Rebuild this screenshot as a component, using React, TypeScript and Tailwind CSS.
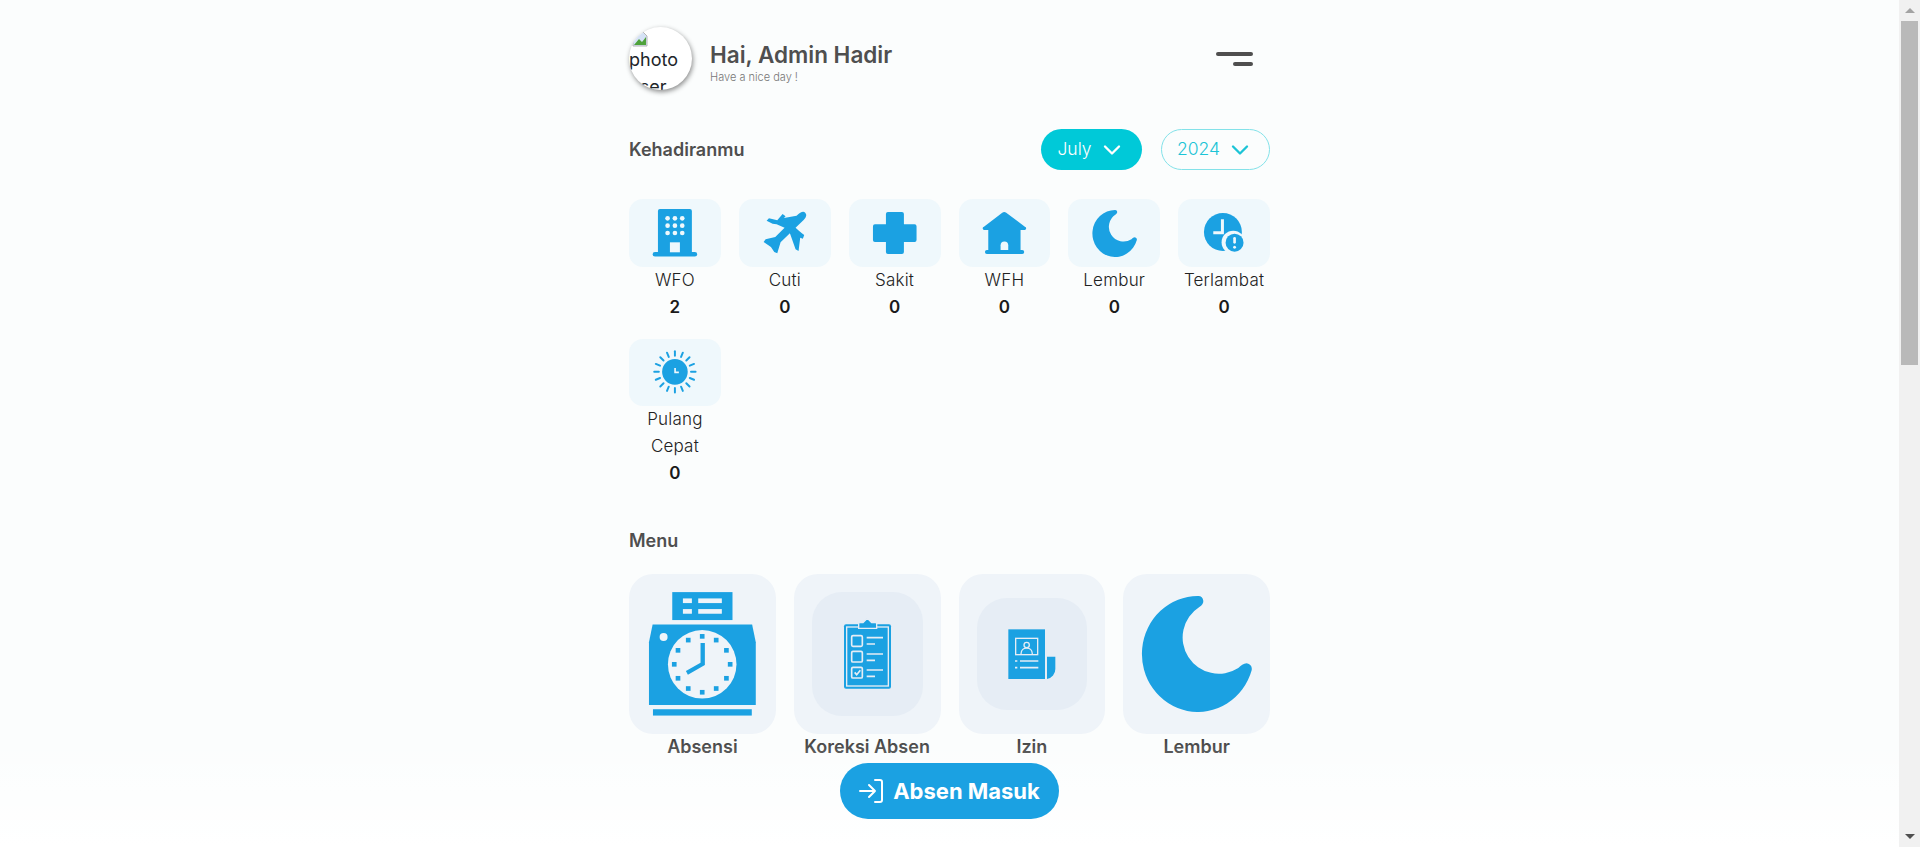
import { ChevronDown } from 'lucide-react';

const blue = '#1ba1e2';
const tileBg = '#eff8fc';
const font = { fontFamily: 'Inter, "Noto Sans", sans-serif' };

function Moon({ className }: { className: string }) {
  return (
    <svg viewBox="573 92 333 348" className={className}>
      <path
        fill={blue}
        d="M745 92A168 174 0 1 0 905 315Q908 298 890 294Q876 296 865 308A108 108 0 0 1 748 125Q760 118 760 107Q758 92 745 92Z"
      />
    </svg>
  );
}

function Building() {
  return (
    <svg viewBox="27 27 276 204" className="h-full w-full">
      <path fill={blue} d="M120 57h90a6 6 0 0 1 6 6v123h9a6 6 0 0 1 0 14H105a6 6 0 0 1 0-14h9V63a6 6 0 0 1 6-6Z" />
      {[85, 107, 129].map((y) =>
        [143, 165, 187].map((x) => <circle key={`${x}-${y}`} cx={x} cy={y} r="7" fill={tileBg} />),
      )}
      <rect x="150" y="157" width="30" height="30" fill={tileBg} />
    </svg>
  );
}

function Plane() {
  return (
    <svg viewBox="357 27 276 204" className="h-full w-full">
      <path
        fill={blue}
        d="M556 68Q564 76 552 89L527 113L537 122L546 130L553 135L549 146L541 143L536 183L527 178L510 130L482 157L472 190L463 186L453 171L431 156L437 148L466 141L494 113L470 103L458 101L440 92L447 85L472 91L488 72L497 79L492 84L530 77Q548 60 556 68Z"
      />
    </svg>
  );
}

function Plus() {
  return (
    <svg viewBox="687 27 276 204" className="h-full w-full">
      <path
        fill={blue}
        d="M804 66h42a6 6 0 0 1 6 6v31h32a6 6 0 0 1 6 6v41a6 6 0 0 1-6 6h-32v30a6 6 0 0 1-6 6h-42a6 6 0 0 1-6-6v-30h-33a6 6 0 0 1-6-6v-41a6 6 0 0 1 6-6h33V72a6 6 0 0 1 6-6Z"
      />
    </svg>
  );
}

function House() {
  return (
    <svg viewBox="27 27 276 204" className="h-full w-full">
      <path
        fill={blue}
        d="M157 68a10 10 0 0 1 12 0l56 42a5 5 0 0 1-3 10h-10v60h5a6 6 0 0 1 0 12H111a6 6 0 0 1 0-12h4v-60h-10a5 5 0 0 1-3-10Z"
      />
      <path fill={tileBg} d="M152 180v-14a11.500 11.500 0 0 1 23 0v14Z" />
    </svg>
  );
}

function ClockAlert() {
  return (
    <svg viewBox="684 27 276 204" className="h-full w-full">
      <circle cx="819" cy="126" r="57" fill={blue} />
      <path fill={tileBg} d="M813 88h9v45h-32v-9h23Z" />
      <circle cx="850" cy="157" r="35" fill={tileBg} />
      <circle cx="854" cy="158" r="27" fill={blue} />
      <rect x="850" y="141" width="8" height="20" rx="4" fill={tileBg} />
      <circle cx="854" cy="172" r="4.500" fill={tileBg} />
    </svg>
  );
}

function SunClock() {
  const rays = Array.from({ length: 16 }, (_, i) => (i * Math.PI) / 8);
  return (
    <svg viewBox="27 27 276 204" className="h-full w-full">
      {rays.map((a) => (
        <line
          key={a}
          x1={165 + 49 * Math.cos(a)}
          y1={127 + 49 * Math.sin(a)}
          x2={165 + 63 * Math.cos(a)}
          y2={127 + 63 * Math.sin(a)}
          stroke={blue}
          strokeWidth="6"
          strokeLinecap="round"
        />
      ))}
      <circle cx="165" cy="127" r="39" fill={blue} />
      <path fill={tileBg} d="M163 115h5v11h9v5h-14Z" />
    </svg>
  );
}

function TimeClock() {
  const ticks = Array.from({ length: 12 }, (_, i) => (i * Math.PI) / 6);
  return (
    <svg viewBox="27 27 441 480" className="h-full w-full">
      <rect x="157" y="81" width="181" height="84" fill={blue} />
      <rect x="189" y="100" width="27" height="14" fill="#eff4f9" />
      <rect x="235" y="100" width="71" height="14" fill="#eff4f9" />
      <rect x="189" y="132" width="27" height="14" fill="#eff4f9" />
      <rect x="235" y="132" width="71" height="14" fill="#eff4f9" />
      <path fill={blue} d="M98 178H397L408 232V420H87V232Z" />
      <circle cx="131" cy="216" r="12" fill="#eff4f9" />
      <circle cx="247" cy="298" r="103" fill="#eff4f9" />
      {ticks.map((a) => (
        <rect
          key={a}
          x={240 + 84 * Math.cos(a)}
          y={291 + 84 * Math.sin(a)}
          width="14"
          height="14"
          fill={blue}
        />
      ))}
      <path fill={blue} d="M242 234h13v66l-51 29-6-11 44-25Z" />
      <rect x="99" y="433" width="297" height="19" fill={blue} />
    </svg>
  );
}

function Clipboard() {
  const light = '#e6edf5';
  return (
    <svg viewBox="522 27 441 480" className="h-full w-full">
      <rect x="672" y="178" width="141" height="193" rx="6" fill={blue} />
      <rect x="680" y="186" width="125" height="177" fill="none" stroke={light} strokeWidth="4" />
      <path
        fill={blue}
        stroke={light}
        strokeWidth="4"
        d="M716 190V176a3 3 0 0 1 3-3h10l13-13 13 13h12a3 3 0 0 1 3 3v14Z"
      />
      {[212, 259, 307].map((y) => (
        <rect key={y} x="695" y={y} width="32" height="32" rx="4" fill={blue} stroke={light} strokeWidth="5" />
      ))}
      <path d="M704 322l6 7 11-13" fill="none" stroke={light} strokeWidth="5" />
      {[218, 267, 315].map((y) => (
        <g key={y} stroke={light} strokeWidth="5">
          <line x1="740" y1={y} x2="789" y2={y} />
          <line x1="740" y1={y + 19} x2="765" y2={y + 19} />
        </g>
      ))}
    </svg>
  );
}

function Document() {
  const light = '#e6edf5';
  return (
    <svg viewBox="27 27 441 480" className="h-full w-full">
      <rect x="175" y="193" width="110" height="149" fill={blue} />
      <path fill={blue} d="M291 275h25v37a30 30 0 0 1-25 30Z" />
      <rect x="197" y="220" width="66" height="49" fill="none" stroke={light} strokeWidth="4" />
      <circle cx="230" cy="240" r="8" fill="none" stroke={light} strokeWidth="4" />
      <path d="M213 267c0-24 34-24 34 0" fill="none" stroke={light} strokeWidth="4" />
      <g stroke={light} strokeWidth="5">
        <line x1="210" y1="288" x2="265" y2="288" />
        <line x1="210" y1="308" x2="265" y2="308" />
        <line x1="195" y1="288" x2="202" y2="288" />
        <line x1="195" y1="308" x2="202" y2="308" />
      </g>
    </svg>
  );
}

const stats = [
  { label: 'WFO', value: 2, icon: <Building />, tile: 'h-[68px]' },
  { label: 'Cuti', value: 0, icon: <Plane />, tile: 'h-[68px]' },
  { label: 'Sakit', value: 0, icon: <Plus />, tile: 'h-[68px]' },
  { label: 'WFH', value: 0, icon: <House />, tile: 'h-[68px]' },
  { label: 'Lembur', value: 0, icon: <Moon className="h-[47px] w-[45px]" />, tile: 'h-[68px]' },
  { label: 'Terlambat', value: 0, icon: <ClockAlert />, tile: 'h-[68px]' },
  { label: 'Pulang Cepat', value: 0, icon: <SunClock />, tile: 'h-[67px]' },
];

const menus = [
  { label: 'Absensi', icon: <TimeClock /> },
  {
    label: 'Koreksi Absen',
    icon: (
      <div className="relative h-[124px] w-[111px] overflow-hidden rounded-[30px] bg-[#e6edf5]">
        <div className="absolute left-[-18px] top-[-18px] h-[160px] w-[147px]">
          <Clipboard />
        </div>
      </div>
    ),
  },
  {
    label: 'Izin',
    icon: (
      <div className="relative h-[112px] w-[110px] overflow-hidden rounded-[30px] bg-[#e6edf5]">
        <div className="absolute left-[-18px] top-[-24px] h-[160px] w-[147px]">
          <Document />
        </div>
      </div>
    ),
  },
  { label: 'Lembur', icon: <Moon className="h-[116px] w-[111px]" /> },
];

export default function App() {
  return (
    <div className="flex h-[847px] overflow-hidden bg-[#fbfdfd]" style={font}>
      <main className="relative flex-1 overflow-hidden">
        <div className="mx-auto w-[641px] pt-[27px]">
          {/* Header */}
          <header className="flex items-center justify-between">
            <div className="flex items-center gap-[18px]">
              <div className="h-[63px] w-[63px] overflow-hidden rounded-full bg-white text-[18px] leading-[27px] text-[#212529] shadow-[1px_2px_5px_rgba(0,0,0,0.45)]">
                <svg viewBox="0 0 16 16" className="ml-[3px] mt-[4px] h-4 w-4">
                  <path d="M1 1h10l4 4v10H1Z" fill="#d5e2f5" stroke="#b5b5b5" />
                  <path d="M2 14l5-6 3 3 4-5v8Z" fill="#4fa23b" />
                </svg>
                <div className="mt-[-1px]">photo</div>
                <div>user</div>
              </div>
              <div className="pt-[8px]">
                <h1 className="text-[22.500px] leading-[28px] font-semibold text-[#4f4f4f]">Hai, Admin Hadir</h1>
                <p className="text-[11px] leading-[16px] font-light text-[#777777]">Have a nice day !</p>
              </div>
            </div>
            <div className="mr-[17px] flex w-[37px] flex-col items-end gap-[6px]">
              <span className="h-1 w-full rounded-full bg-[#4f4f4f]" />
              <span className="h-1 w-5 rounded-full bg-[#4f4f4f]" />
            </div>
          </header>

          {/* Kehadiran */}
          <section className="mt-[39px] flex h-[41px] items-center justify-between">
            <h2 className="-mt-px text-[18px] font-semibold text-[#4f4f4f]">Kehadiranmu</h2>
            <div className="flex gap-[19px]">
              <button className="flex h-[41px] w-[101px] items-center justify-center gap-[6px] rounded-full bg-[#00c9d8] text-[17.500px] font-light text-white">
                July <ChevronDown size={28} strokeWidth={2} />
              </button>
              <button className="flex h-[41px] w-[109px] items-center justify-center gap-[6px] rounded-full border border-[#83e2e9] text-[17.500px] font-light text-[#1cc4d6]">
                2024 <ChevronDown size={28} strokeWidth={2} />
              </button>
            </div>
          </section>

          <div className="mt-[29px] grid grid-cols-6 gap-x-[18px] gap-y-[18px]">
            {stats.map((s) => (
              <div key={s.label} className="flex flex-col items-center text-center">
                <div
                  className={`flex w-full items-center justify-center rounded-[14px] bg-[#eff8fc] ${s.tile}`}
                >
                  {s.icon}
                </div>
                <div className="text-[17px] leading-[27px] font-light tracking-[0.2px] text-[#222222]">{s.label}</div>
                <div className="text-[17px] leading-[27px] font-semibold text-[#1a1a1a]">{s.value}</div>
              </div>
            ))}
          </div>

          {/* Menu */}
          <h2 className="mt-[40px] text-[18px] leading-[27px] font-semibold text-[#4f4f4f]">Menu</h2>
          <div className="mt-[20px] grid grid-cols-4 gap-x-[18px]">
            {menus.map((m) => (
              <div key={m.label} className="text-center">
                <div className="flex h-[160px] items-center justify-center rounded-[24px] bg-[#eff4f9]">{m.icon}</div>
                <div className="-mt-px text-[18px] leading-[27px] font-semibold text-[#3f3f3f]">{m.label}</div>
              </div>
            ))}
          </div>
        </div>

        {/* Fade under the floating button */}
        <div className="absolute inset-x-0 bottom-0 h-[110px] bg-gradient-to-b from-transparent to-white" />
        <div className="absolute inset-x-0 bottom-[28px] flex justify-center">
          <button className="flex h-[56px] w-[219px] items-center justify-center gap-[10px] rounded-full bg-[#1ba1e2] text-[22px] font-bold text-white">
            <svg
              viewBox="0 0 24 24"
              className="h-6 w-6"
              fill="none"
              stroke="white"
              strokeWidth="2"
              strokeLinecap="round"
              strokeLinejoin="round"
            >
              <path d="M1 12h15M10 6l6 6-6 6M16 1h5a2 2 0 0 1 2 2v18a2 2 0 0 1-2 2h-5" />
            </svg>
            Absen Masuk
          </button>
        </div>
      </main>

      {/* Scrollbar */}
      <aside className="flex w-[21px] flex-col justify-between bg-[#f1f1f1]">
        <div>
          <div className="flex h-[21px] items-center justify-center">
            <div className="h-0 w-0 border-x-[5px] border-b-[5px] border-x-transparent border-b-[#a3a3a3]" />
          </div>
          <div className="mx-[2px] h-[344px] bg-[#b9b9b9]" />
        </div>
        <div className="flex h-[21px] items-center justify-center">
          <div className="h-0 w-0 border-x-[5px] border-t-[5px] border-x-transparent border-t-[#505050]" />
        </div>
      </aside>
    </div>
  );
}
